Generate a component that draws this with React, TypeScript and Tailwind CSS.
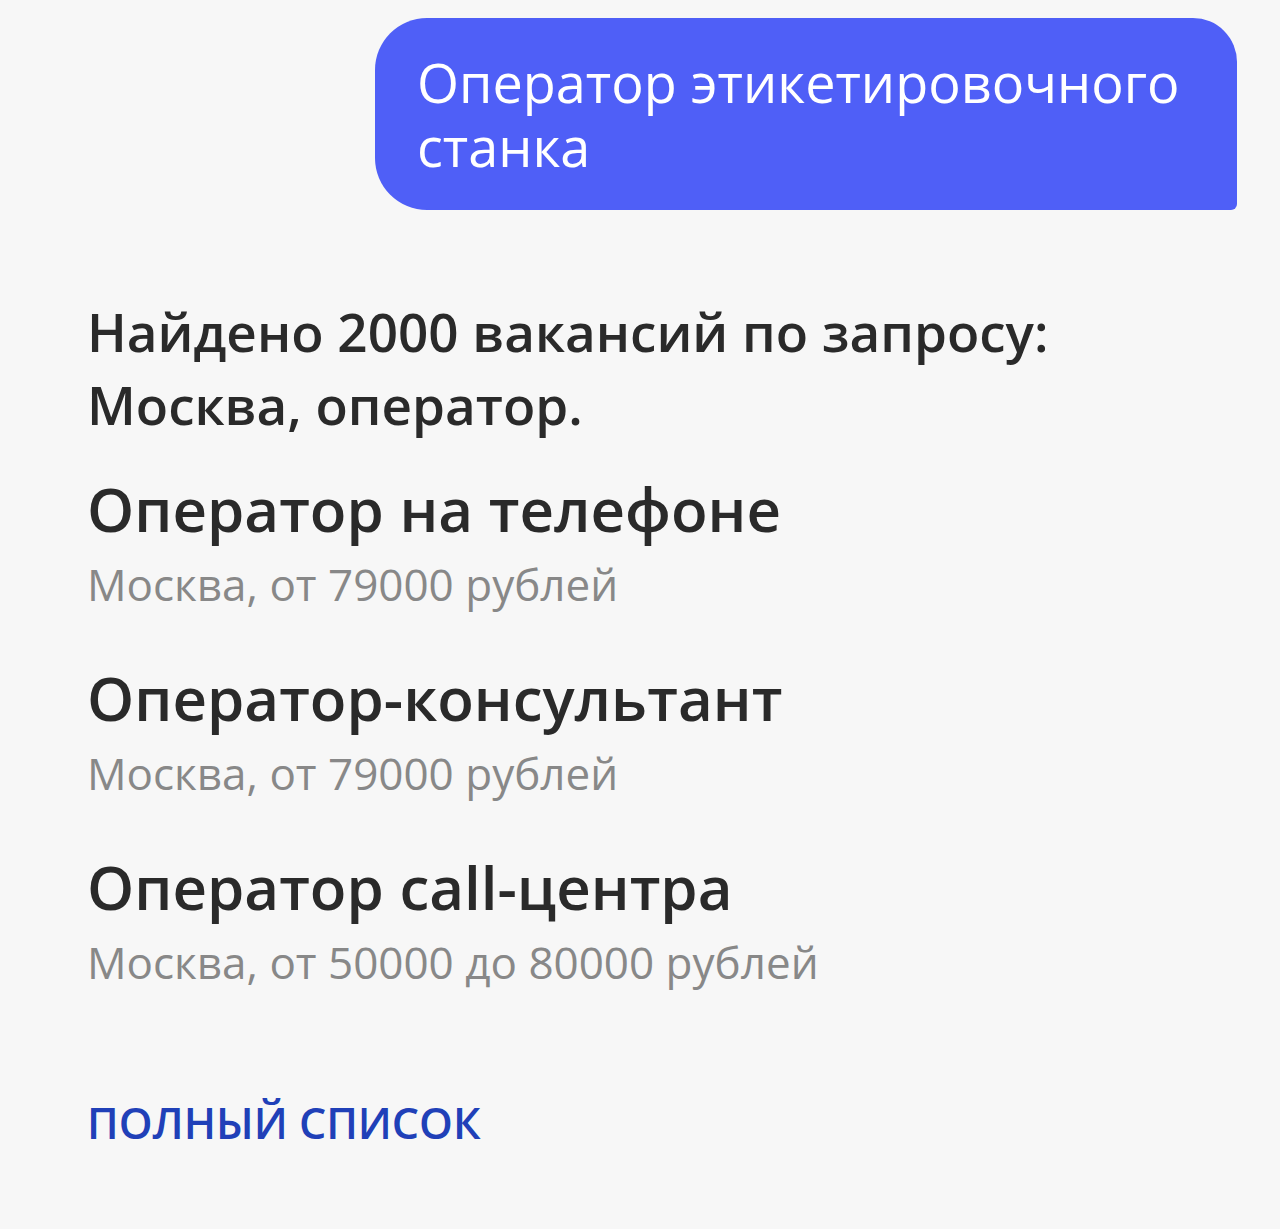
export default function App() {
  return (
    <div className="min-h-[1229px] w-[1280px] bg-[#f7f7f7] font-['Open_Sans',sans-serif]">
      <div className="flex justify-end pr-[43px] pt-[18px]">
        <div className="w-[862px] rounded-l-[52px] rounded-tr-[44px] rounded-br-[6px] bg-[#4f5ff7] pl-[42px] pr-[20px] pt-[32px] pb-[32px] text-[54px] leading-[64px] text-white">
          Оператор этикетировочного станка
        </div>
      </div>
      <div className="pl-[87px] pt-[85px]">
        <div className="text-[53px] leading-[73px] font-semibold text-[#2a2a2a]">
          Найдено 2000 вакансий по запросу:
          <br />
          Москва, оператор.
        </div>
        <div className="mt-[28px] flex flex-col gap-[39px]">
          {[
            ["Оператор на телефоне", "Москва, от 79000 рублей"],
            ["Оператор-консультант", "Москва, от 79000 рублей"],
            ["Оператор call-центра", "Москва, от 50000 до 80000 рублей"],
          ].map(([t, s]) => (
            <div key={t} className="flex flex-col">
              <div className="text-[60px] leading-[80px] font-semibold text-[#2a2a2a]">{t}</div>
              <div className="text-[44px] leading-[70px] text-[#888888]">{s}</div>
            </div>
          ))}
        </div>
        <div className="mt-[96px] text-[43px] leading-[60px] font-semibold uppercase text-[#2040b8]">
          полный список
        </div>
      </div>
    </div>
  );
}
